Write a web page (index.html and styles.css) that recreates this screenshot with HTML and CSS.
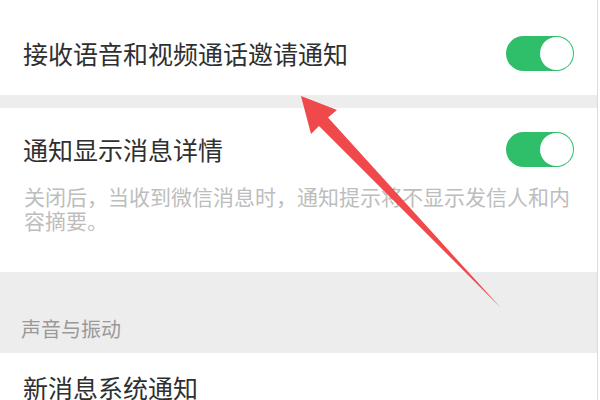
FILE: index.html
```html
<!DOCTYPE html>
<html lang="zh-CN">
<head>
<meta charset="utf-8">
<link rel="stylesheet" href="styles.css">
</head>
<body>
<div class="page">
  <div class="row first">
    <span class="title">接收语音和视频通话邀请通知</span>
    <span class="toggle"><span class="knob"></span></span>
  </div>
  <div class="gap"></div>
  <div class="block">
    <div class="row-inline">
      <span class="title">通知显示消息详情</span>
      <span class="toggle"><span class="knob"></span></span>
    </div>
    <p class="desc">关闭后，当收到微信消息时，通知提示将不显示发信人和内容摘要。</p>
  </div>
  <div class="section">声音与振动</div>
  <div class="row last">
    <span class="title">新消息系统通知</span>
  </div>
  <svg class="arrow" width="600" height="400" viewBox="0 0 600 400">
    <polygon points="301,96 337,110 328,117.5 501,308 319,126 311,134" fill="#f0494b"/>
  </svg>
</div>
</body>
</html>
```
FILE: styles.css
```css
* { box-sizing: border-box; }
html, body { margin: 0; padding: 0; background: #fff; }
body {
  width: 600px;
  height: 400px;
  overflow: hidden;
  font-family: "Noto Sans CJK SC", "Noto Sans", sans-serif;
}
.page {
  position: relative;
  width: 598px;
  height: 400px;
  border-right: 1px solid #dcdcdc;
  overflow: hidden;
}
.title {
  font-size: 25px;
  line-height: 35px;
  color: #2f2f2f;
}
.row {
  display: flex;
  align-items: center;
  justify-content: space-between;
  padding: 0 23px 0 23px;
}
.row.first {
  height: 95px;
  padding-top: 12px;
}
.gap {
  height: 13px;
  background: #ededed;
}
.block {
  padding: 24px 23px 40px 23px;
}
.row-inline {
  display: flex;
  align-items: center;
  justify-content: space-between;
}
.desc {
  margin: 17px 0 0 1px;
  width: 550px;
  font-size: 21px;
  line-height: 24px;
  color: #bdbdbd;
}
.section {
  height: 81px;
  background: #ededed;
  padding: 47px 0 0 21px;
  font-size: 20px;
  line-height: 20px;
  color: #999;
}
.row.last {
  padding-top: 22px;
}
.row.last .title { line-height: 24px; }
.toggle {
  display: flex;
  justify-content: flex-end;
  align-items: center;
  width: 68px;
  height: 35px;
  padding: 1px;
  border-radius: 18px;
  background: #2fbf6b;
}
.knob {
  width: 33px;
  height: 33px;
  border-radius: 50%;
  background: #fff;
}
.arrow {
  position: absolute;
  left: 0;
  top: 0;
}
```
